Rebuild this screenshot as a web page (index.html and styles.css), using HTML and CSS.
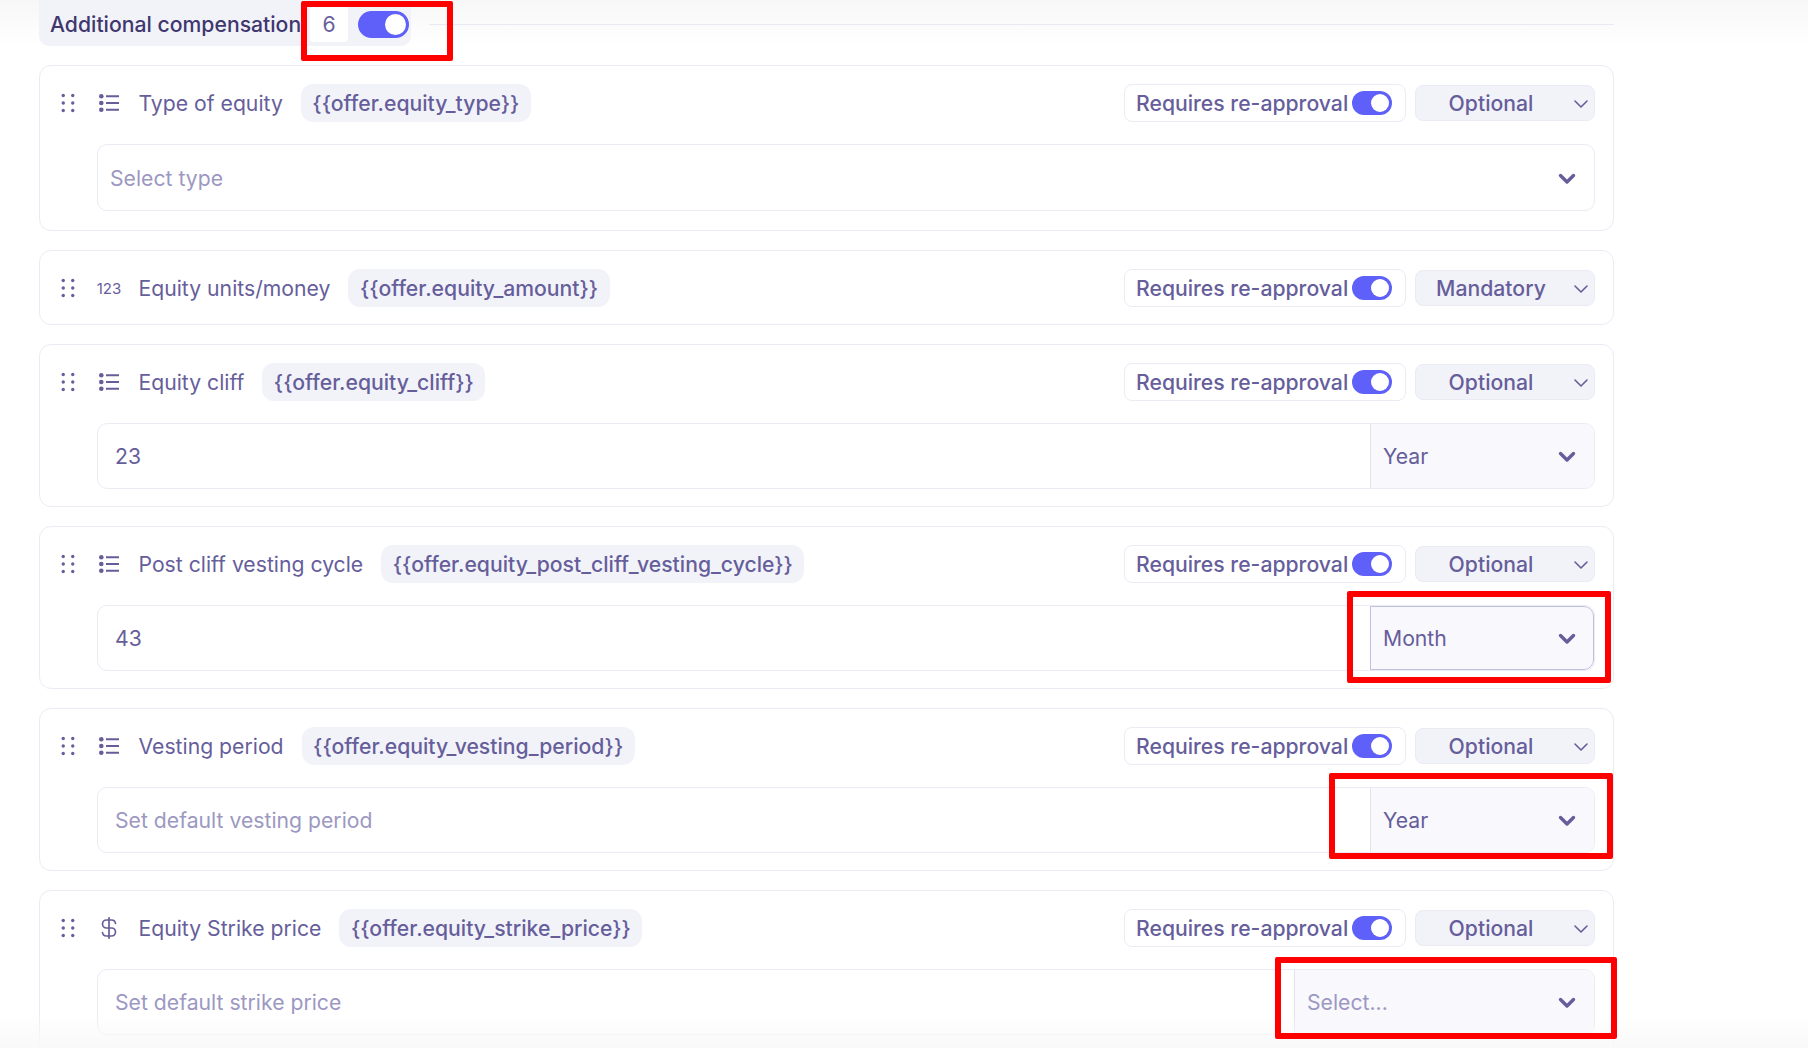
FILE: index.html
```html
<!DOCTYPE html>
<html lang="en">
<head>
<meta charset="utf-8">
<title>Additional compensation</title>
<link rel="stylesheet" href="styles.css">
</head>
<body>
<svg class="defs" width="0" height="0" aria-hidden="true">
  <symbol id="drag" viewBox="0 0 14 20"><g fill="currentColor"><circle cx="2.250" cy="2.500" r="1.700"/><circle cx="11.750" cy="2.500" r="1.700"/><circle cx="2.250" cy="10" r="1.700"/><circle cx="11.750" cy="10" r="1.700"/><circle cx="2.250" cy="17.500" r="1.700"/><circle cx="11.750" cy="17.500" r="1.700"/></g></symbol>
  <symbol id="list" viewBox="0 0 20 18"><g fill="currentColor"><circle cx="2.300" cy="2.300" r="2.300"/><circle cx="2.300" cy="9" r="2.300"/><circle cx="2.300" cy="15.700" r="2.300"/></g><path d="M7 2.300h13M7 9h13M7 15.700h13" stroke="currentColor" stroke-width="2" fill="none"/></symbol>
  <symbol id="dollar" viewBox="0 0 16 22"><path d="M14.500 6.500a4 4 0 0 0-4-3.500h-5a4 4 0 0 0 0 8h5a4 4 0 0 1 0 8h-5a4 4 0 0 1-4-3.500M8 .8v20.400" fill="none" stroke="currentColor" stroke-width="1.700" stroke-linecap="round"/></symbol>
  <symbol id="chev-thin" viewBox="0 0 16 10"><path d="M2 2l6 6 6-6" fill="none" stroke="currentColor" stroke-width="1.600" stroke-linecap="round" stroke-linejoin="round"/></symbol>
  <symbol id="chev-bold" viewBox="0 0 18 12"><path d="M2.500 2.500L9 9l6.500-6.500" fill="none" stroke="currentColor" stroke-width="3.400" stroke-linecap="round" stroke-linejoin="round"/></symbol>
</svg>

<main class="page">
  <header class="section-head">
    <div class="section-pill">
      <span class="section-title">Additional compensation</span>
      <span class="count">6</span>
      <span class="toggle toggle-lg"></span>
    </div>
    <span class="section-rule"></span>
  </header>

  <section class="card card-first">
    <div class="row">
      <svg class="drag"><use href="#drag"/></svg>
      <span class="type-icon"><svg class="list"><use href="#list"/></svg></span>
      <span class="label">Type of equity</span>
      <span class="chip">{{offer.equity_type}}</span>
      <div class="row-end">
        <div class="approval">Requires re-approval<span class="toggle"></span></div>
        <div class="req"><span>Optional</span><svg class="chev-thin"><use href="#chev-thin"/></svg></div>
      </div>
    </div>
    <div class="field field-select">
      <span class="placeholder">Select type</span>
      <svg class="chev-bold"><use href="#chev-bold"/></svg>
    </div>
  </section>

  <section class="card card-plain">
    <div class="row">
      <svg class="drag"><use href="#drag"/></svg>
      <span class="type-icon num">123</span>
      <span class="label">Equity units/money</span>
      <span class="chip">{{offer.equity_amount}}</span>
      <div class="row-end">
        <div class="approval">Requires re-approval<span class="toggle"></span></div>
        <div class="req"><span>Mandatory</span><svg class="chev-thin"><use href="#chev-thin"/></svg></div>
      </div>
    </div>
  </section>

  <section class="card">
    <div class="row">
      <svg class="drag"><use href="#drag"/></svg>
      <span class="type-icon"><svg class="list"><use href="#list"/></svg></span>
      <span class="label">Equity cliff</span>
      <span class="chip">{{offer.equity_cliff}}</span>
      <div class="row-end">
        <div class="approval">Requires re-approval<span class="toggle"></span></div>
        <div class="req"><span>Optional</span><svg class="chev-thin"><use href="#chev-thin"/></svg></div>
      </div>
    </div>
    <div class="field">
      <span class="value">23</span>
      <div class="unit"><span>Year</span><svg class="chev-bold"><use href="#chev-bold"/></svg></div>
    </div>
  </section>

  <section class="card">
    <div class="row">
      <svg class="drag"><use href="#drag"/></svg>
      <span class="type-icon"><svg class="list"><use href="#list"/></svg></span>
      <span class="label">Post cliff vesting cycle</span>
      <span class="chip">{{offer.equity_post_cliff_vesting_cycle}}</span>
      <div class="row-end">
        <div class="approval">Requires re-approval<span class="toggle"></span></div>
        <div class="req"><span>Optional</span><svg class="chev-thin"><use href="#chev-thin"/></svg></div>
      </div>
    </div>
    <div class="field">
      <span class="value">43</span>
      <div class="unit unit-focus"><span>Month</span><svg class="chev-bold"><use href="#chev-bold"/></svg></div>
    </div>
  </section>

  <section class="card">
    <div class="row">
      <svg class="drag"><use href="#drag"/></svg>
      <span class="type-icon"><svg class="list"><use href="#list"/></svg></span>
      <span class="label">Vesting period</span>
      <span class="chip">{{offer.equity_vesting_period}}</span>
      <div class="row-end">
        <div class="approval">Requires re-approval<span class="toggle"></span></div>
        <div class="req"><span>Optional</span><svg class="chev-thin"><use href="#chev-thin"/></svg></div>
      </div>
    </div>
    <div class="field">
      <span class="placeholder value">Set default vesting period</span>
      <div class="unit"><span>Year</span><svg class="chev-bold"><use href="#chev-bold"/></svg></div>
    </div>
  </section>

  <section class="card">
    <div class="row">
      <svg class="drag"><use href="#drag"/></svg>
      <span class="type-icon"><svg class="dollar"><use href="#dollar"/></svg></span>
      <span class="label">Equity Strike price</span>
      <span class="chip">{{offer.equity_strike_price}}</span>
      <div class="row-end">
        <div class="approval">Requires re-approval<span class="toggle"></span></div>
        <div class="req"><span>Optional</span><svg class="chev-thin"><use href="#chev-thin"/></svg></div>
      </div>
    </div>
    <div class="field">
      <span class="placeholder value">Set default strike price</span>
      <div class="unit unit-wide"><span class="placeholder">Select...</span><svg class="chev-bold"><use href="#chev-bold"/></svg></div>
    </div>
  </section>
</main>

<div class="fade-bottom"></div>
<div class="mark mark-head"></div>
<div class="mark mark-month"></div>
<div class="mark mark-year"></div>
<div class="mark mark-select"></div>
</body>
</html>
```
FILE: styles.css
```css
* { box-sizing: border-box; }
html, body { margin: 0; height: 100%; }
body {
  position: relative;
  height: 1048px;
  overflow: hidden;
  background: linear-gradient(#f7f7f8, #fff 46px);
  color: #665e9b;
  font-family: Inter, "Noto Sans", sans-serif;
  font-size: 21.200px;
}
.defs { position: absolute; }
.page {
  width: 1614px;
  padding-left: 39px;
  display: flex;
  flex-direction: column;
  gap: 19px;
}
.section-head {
  height: 46px;
  display: flex;
  align-items: center;
  gap: 18px;
}
.section-pill {
  width: 372px;
  height: 46px;
  padding: 2px 2px 0 11px;
  display: flex;
  align-items: center;
  background: #f2f3f9;
  border-radius: 0 0 10px 10px;
  flex: none;
}
.section-title {
  color: #40376f;
  font-weight: 500;
  white-space: nowrap;
  width: 250px;
  flex: none;
}
.count {
  width: 38px;
  height: 36px;
  margin-left: 10px;
  background: #fff;
  border-radius: 4px;
  display: flex;
  align-items: center;
  justify-content: center;
  flex: none;
}
.toggle {
  position: relative;
  display: block;
  flex: none;
  width: 40px;
  height: 24px;
  border-radius: 12px;
  background: #5f5ff9;
}
.toggle::after {
  content: "";
  position: absolute;
  top: 3px;
  right: 3px;
  width: 18px;
  height: 18px;
  border-radius: 50%;
  background: #fff;
}
.toggle-lg {
  width: 51px;
  height: 27px;
  border-radius: 14px;
  margin-left: 10px;
}
.toggle-lg::after { width: 21px; height: 21px; top: 3px; right: 3px; }
.section-rule { flex: 1; height: 1px; margin-top: 2px; background: #e9e9f5; }

.card {
  border: 1px solid #ebebf6;
  border-radius: 12px;
  padding: 17px 18px 17px;
  display: flex;
  flex-direction: column;
  gap: 21px;
  background: #fff;
}
.card-first { padding-bottom: 19px; }
.card-plain { padding-bottom: 16px; }
.row {
  height: 40px;
  display: flex;
  align-items: center;
}
.drag { width: 14px; height: 20px; margin-left: 3px; margin-right: 22px; flex: none; }
.type-icon {
  width: 24px;
  display: flex;
  justify-content: center;
  align-items: center;
  margin-right: 17.500px;
  flex: none;
}
.list { width: 20px; height: 18px; }
.dollar { width: 16px; height: 22px; }
.num { font-size: 15px; }
.label { white-space: nowrap; }
.chip {
  height: 38px;
  margin-left: 18px;
  padding: 0 11.500px;
  display: flex;
  align-items: center;
  background: #f2f3f9;
  border-radius: 12px;
  font-weight: 500;
  white-space: nowrap;
}
.row-end {
  margin-left: auto;
  display: flex;
  align-items: center;
  gap: 9px;
}
.approval {
  width: 282px;
  height: 38px;
  padding: 0 13px 0 11px;
  display: flex;
  align-items: center;
  justify-content: space-between;
  border: 1px solid #ebebf6;
  border-radius: 8px;
  font-weight: 500;
  white-space: nowrap;
}
.req {
  position: relative;
  width: 180px;
  height: 36px;
  padding-right: 28px;
  display: flex;
  align-items: center;
  justify-content: center;
  background: #f2f3f9;
  border: 1px solid #ebebf6;
  border-radius: 8px;
  font-weight: 500;
}
.chev-thin { position: absolute; right: 5px; top: 13px; width: 16px; height: 10px; }
.field {
  height: 66px;
  display: flex;
  align-items: center;
  margin-left: 39px;
  border: 1px solid #ebebf6;
  border-radius: 10px;
  overflow: hidden;
}
.field-select {
  height: 67px;
  padding: 0 18px 0 12px;
  justify-content: space-between;
}
.chev-bold { width: 18px; height: 12px; margin-top: 2px; flex: none; }
.placeholder { color: #9c98c2; }
.value { padding-left: 17px; flex: 1; }
.unit {
  width: 224px;
  height: 100%;
  padding: 0 18px 0 12px;
  display: flex;
  align-items: center;
  justify-content: space-between;
  background: #f8f8fd;
  border-left: 1px solid #e4e4f1;
  flex: none;
}
.unit-wide { width: 300px; }
.unit-focus {
  padding-right: 17px;
  border: 1px solid #bfc0de;
  border-radius: 0 10px 10px 0;
}

.mark {
  position: absolute;
  border: 6px solid #fe0000;
  border-radius: 2px;
}
.mark-head { left: 301px; top: 1px; width: 152px; height: 60px; }
.mark-month { left: 1347px; top: 591px; width: 264px; height: 92px; }
.mark-year { left: 1329px; top: 773px; width: 284px; height: 86px; }
.mark-select { left: 1275px; top: 957px; width: 342px; height: 82px; }

.fade-bottom {
  position: absolute;
  left: 0;
  right: 0;
  bottom: 0;
  height: 34px;
  pointer-events: none;
  background: linear-gradient(rgba(249,249,250,0), #f9f9fa);
}
```
